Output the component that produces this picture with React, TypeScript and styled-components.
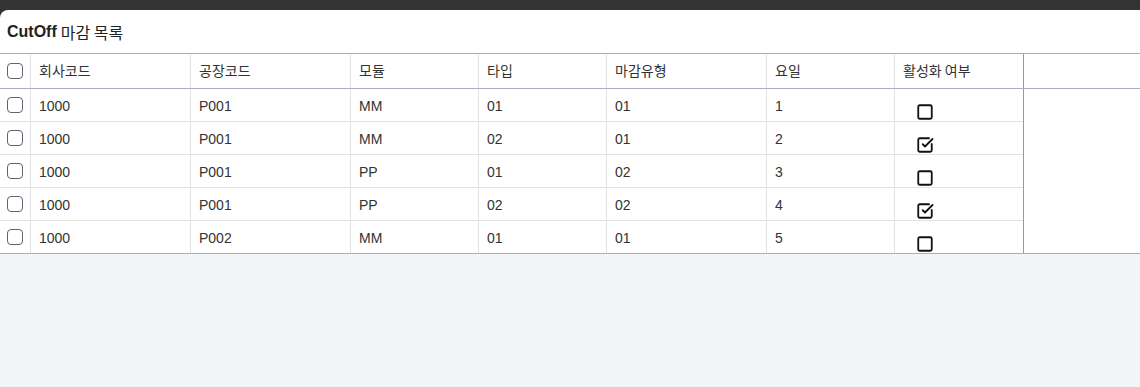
import React from "react";
import styled, { createGlobalStyle } from "styled-components";
import { Square, SquareCheckBig } from "lucide-react";

const GlobalStyle = createGlobalStyle`
  html, body { margin: 0; padding: 0; height: 100%; }
  body {
    background: #f3f4f6;
    font-family: "Liberation Sans", Arial, "Noto Sans CJK KR", sans-serif;
    color: #333;
  }
  #root { height: 100%; }
`;

const Page = styled.div`
  height: 100%;
  display: flex;
  flex-direction: column;
  overflow: hidden;
`;

const Screen = styled.div`
  background: #333333;
  padding-top: 10px;
`;

const Card = styled.div`
  background: #ffffff;
  border-top-left-radius: 8px;
`;

const Title = styled.div`
  height: 43px;
  display: flex;
  align-items: center;
  padding: 1px 7px 0;
  box-sizing: border-box;
  font-size: 16px;
  color: #222;
  b { font-weight: 700; margin-right: 4px; }
`;

const KoText = styled.span`
  font-family: "Noto Sans CJK KR", sans-serif;
`;

const Rest = styled.div`
  flex: 1;
  background: #f3f4f6;
`;

const Table = styled.div`
  border-top: 1px solid #a7b0bc;
  border-bottom: 1px solid #a7b0bc;
  background: #fff;
`;

const cols = "31px 160px 160px 128px 128px 160px 128px 129px";

const HeaderRow = styled.div`
  display: grid;
  grid-template-columns: ${cols} 1fr;
  height: 35px;
  border-bottom: 1px solid #a7b0bc;
  box-sizing: border-box;
`;

const HeadCell = styled.div<{ $edge?: boolean }>`
  display: flex;
  align-items: center;
  padding: 0 8px 2px;
  font-size: 14px;
  color: #333;
  font-family: "Noto Sans CJK KR", "Liberation Sans", sans-serif;
  border-right: 1px solid ${(p) => (p.$edge ? "#9a9a9a" : "#e2e2e2")};
  box-sizing: border-box;
`;

const CheckCell = styled.div`
  display: flex;
  align-items: center;
  justify-content: center;
  border-right: 1px solid #e2e2e2;
  box-sizing: border-box;
`;

const Box = styled.span`
  width: 14px;
  height: 14px;
  border: 1.5px solid #5a6472;
  border-radius: 4px;
  background: #fff;
  display: inline-block;
`;

const Filler = styled.div``;

const BodyArea = styled.div`
  display: flex;
`;

const Body = styled.div`
  width: 1024px;
  border-right: 1px solid #9a9a9a;
  box-sizing: border-box;
`;

const Row = styled.div`
  display: grid;
  grid-template-columns: ${cols};
  height: 33px;
  box-sizing: border-box;
  border-bottom: 1px solid #e2e2e2;
  &:last-child { border-bottom: none; height: 32px; }
`;

const Cell = styled.div`
  display: flex;
  align-items: center;
  padding: 2px 8px 0;
  font-size: 14px;
  color: #333;
  border-right: 1px solid #e2e2e2;
  box-sizing: border-box;
`;

const IconCell = styled.div`
  padding: 14px 0 0 21px;
  box-sizing: border-box;
  color: #111;
  svg { display: block; }
`;

type R = { c: string; p: string; m: string; t: string; k: string; d: string; on: boolean };

const rows: R[] = [
  { c: "1000", p: "P001", m: "MM", t: "01", k: "01", d: "1", on: false },
  { c: "1000", p: "P001", m: "MM", t: "02", k: "01", d: "2", on: true },
  { c: "1000", p: "P001", m: "PP", t: "01", k: "02", d: "3", on: false },
  { c: "1000", p: "P001", m: "PP", t: "02", k: "02", d: "4", on: true },
  { c: "1000", p: "P002", m: "MM", t: "01", k: "01", d: "5", on: false },
];

export default function App() {
  return (
    <>
      <GlobalStyle />
      <Page>
        <Screen>
          <Card>
            <Title>
              <b>CutOff</b>
              <KoText>마감 목록</KoText>
            </Title>
            <Table>
              <HeaderRow>
                <CheckCell><Box /></CheckCell>
                <HeadCell>회사코드</HeadCell>
                <HeadCell>공장코드</HeadCell>
                <HeadCell>모듈</HeadCell>
                <HeadCell>타입</HeadCell>
                <HeadCell>마감유형</HeadCell>
                <HeadCell>요일</HeadCell>
                <HeadCell $edge>활성화 여부</HeadCell>
                <Filler />
              </HeaderRow>
              <BodyArea>
                <Body>
                  {rows.map((r, i) => (
                    <Row key={i}>
                      <CheckCell><Box /></CheckCell>
                      <Cell>{r.c}</Cell>
                      <Cell>{r.p}</Cell>
                      <Cell>{r.m}</Cell>
                      <Cell>{r.t}</Cell>
                      <Cell>{r.k}</Cell>
                      <Cell>{r.d}</Cell>
                      <IconCell>
                        {r.on ? (
                          <SquareCheckBig size={18} strokeWidth={2.4} />
                        ) : (
                          <Square size={18} strokeWidth={2.4} />
                        )}
                      </IconCell>
                    </Row>
                  ))}
                </Body>
                <Filler />
              </BodyArea>
            </Table>
          </Card>
        </Screen>
        <Rest />
      </Page>
    </>
  );
}
